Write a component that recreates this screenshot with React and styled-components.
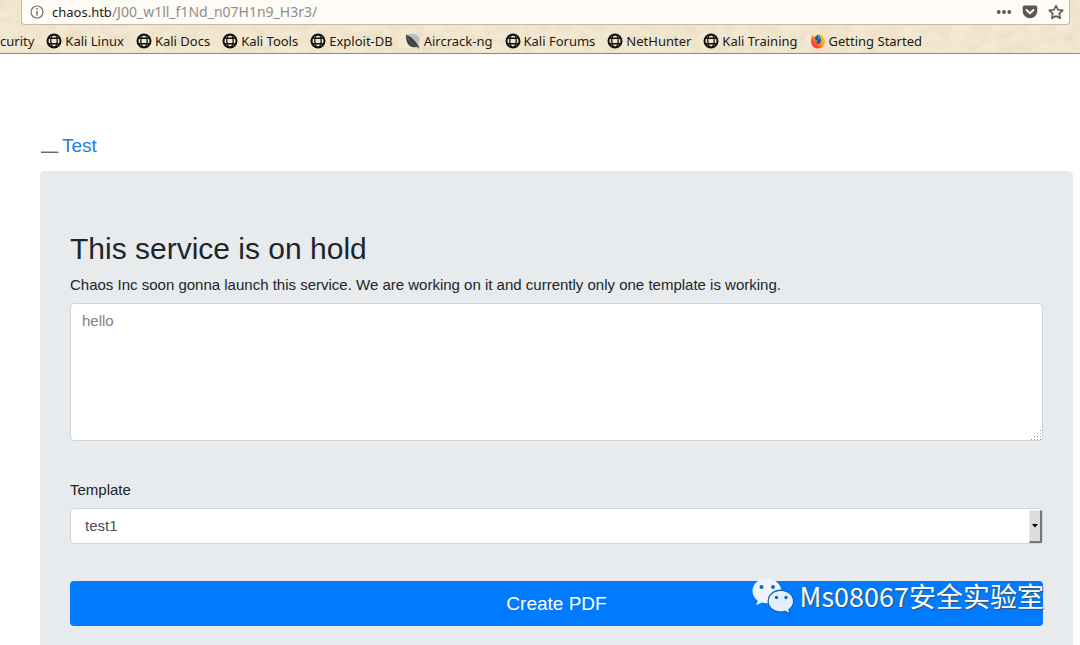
import React from "react";
import styled, { createGlobalStyle } from "styled-components";

const GlobalStyle = createGlobalStyle`
  *, *::before, *::after { box-sizing: border-box; }
  body {
    margin: 0;
    background: #fff;
    color: #212529;
    font-family: "Liberation Sans", Arial, sans-serif;
    font-size: 15px;
    line-height: 24px;
  }
`;

const Page = styled.div`
  display: flex;
  flex-direction: column;
  min-height: 100vh;
`;

const Chrome = styled.header`
  position: relative;
  isolation: isolate;
  flex: none;
  padding: 0 10px 0 0;
  overflow: hidden;
  background: #f3e9d3;
  border-bottom: 1px solid #8f8778;
  font-family: "Noto Sans", "Open Sans", sans-serif;
  color: #1c1a17;
`;

const Paper = styled.svg`
  position: absolute;
  inset: 0;
  z-index: -1;
  width: 100%;
  height: 100%;
`;

const AddressBar = styled.div`
  display: flex;
  align-items: center;
  height: 25px;
  margin-left: 21px;
  padding: 0 5px 0 8px;
  background: rgba(255, 254, 251, 0.88);
  border: 1px solid #c3b9a6;
  border-top: 0;
  border-radius: 0 0 4px 4px;
  font-size: 13px;
  line-height: 24px;
`;

const Host = styled.label`
  margin-left: 8px;
`;

const PathInput = styled.input`
  flex: 1;
  min-width: 0;
  padding: 0;
  border: 0;
  outline: 0;
  background: none;
  color: #8f8d8a;
  font: inherit;
  font-size: 14px;
`;

const IconButton = styled.button`
  display: flex;
  padding: 0;
  border: 0;
  background: none;
  color: #5a5855;
  margin-left: ${(p) => p.$gap || 0}px;
`;

const Bookmarks = styled.nav`
  display: flex;
  align-items: center;
  gap: 12px;
  height: 28px;
  padding-top: 4px;
  white-space: nowrap;
`;

const Bookmark = styled.a`
  display: flex;
  align-items: center;
  gap: 3px;
  color: inherit;
  font-size: 13px;
  line-height: 20px;
  text-decoration: none;
`;

const Main = styled.main`
  display: flex;
  flex-direction: column;
  flex: 1;
  padding: 77px 7px 0 40px;
`;

const Brand = styled.a`
  display: flex;
  align-items: center;
  align-self: flex-start;
  gap: 3px;
  height: 30px;
  color: #1c7fe6;
  font-size: 19px;
  text-decoration: none;
`;

const Panel = styled.section`
  flex: 1;
  margin-top: 10px;
  padding: 60px 30px 20px;
  background: #e7ebee;
  border-radius: 5px 5px 0 0;
`;

const Title = styled.h1`
  margin: 0 0 6px;
  font-size: 30px;
  font-weight: 400;
  line-height: 36px;
`;

const Form = styled.form`
  display: flex;
  flex-direction: column;
`;

const FieldLabel = styled.label`
  display: block;
  margin-bottom: 6px;
`;

const Field = styled.div`
  position: relative;
  display: flex;
  margin-bottom: 37px;
`;

const TextArea = styled.textarea`
  width: 100%;
  height: 138px;
  padding: 5px 11px;
  border: 1px solid #ced4da;
  border-radius: 4px;
  background: #fff;
  color: #495057;
  font: inherit;
  resize: none;
  &::placeholder { color: #7b8288; opacity: 1; }
`;

const Grip = styled.svg`
  position: absolute;
  right: 1px;
  bottom: 1px;
`;

const Select = styled.select`
  appearance: none;
  width: 100%;
  height: 36px;
  padding: 0 14px;
  border: 1px solid #ced4da;
  border-radius: 4px;
  background: #fff;
  color: #495057;
  font: inherit;
`;

const Arrow = styled.span`
  position: absolute;
  top: 2px;
  right: 1px;
  bottom: 1px;
  display: flex;
  align-items: center;
  justify-content: center;
  width: 13px;
  background: #dcdcdc;
  border: solid;
  border-width: 1px 2px 2px 1px;
  border-color: #ececec #777 #777 #ececec;
  pointer-events: none;
`;

const SubmitArea = styled.div`
  position: relative;
  display: flex;
`;

const Submit = styled.button`
  width: 100%;
  height: 45px;
  padding: 0;
  border: 0;
  border-radius: 4px;
  background: #007bff;
  color: #fff;
  font: inherit;
  font-size: 19px;
`;

const Watermark = styled.div`
  position: absolute;
  right: -1px;
  top: -5px;
  display: flex;
  align-items: center;
  gap: 6px;
  color: #fff;
  font-family: "Noto Sans CJK SC", sans-serif;
  font-size: 27px;
  line-height: 40px;
  white-space: nowrap;
  text-shadow: 1px 1px 1px #35506e;
  pointer-events: none;
`;

const Globe = () => (
  <svg width="16" height="16" viewBox="0 0 16 16" fill="none" stroke="#12100d" aria-hidden="true">
    <circle cx="8" cy="8" r="6.5" strokeWidth="2" />
    <ellipse cx="8" cy="8" rx="3.2" ry="6.3" strokeWidth="1.3" />
    <path d="M2.5 5.3h11M2.5 10.7h11" strokeWidth="1.4" />
  </svg>
);

const Aircrack = () => (
  <svg width="16" height="16" viewBox="0 0 16 16" aria-hidden="true">
    <path d="M2 1.500C7 0 13 1 14.500 5.500L13.500 13Z" fill="#b9bec1" />
    <path d="M1 1.500C5 3 10.500 7.500 13.500 13.500C9.500 15.300 4 13.800 2.300 10C1.200 7 .8 4 1 1.500Z" fill="#3d4040" />
    <path d="M2 3c1 4 4.500 8.500 10 10.500" stroke="#777" strokeWidth=".7" fill="none" />
    <path d="M11 13l2.500-.8L14 16Z" fill="#56514a" />
  </svg>
);

const Firefox = () => (
  <svg width="16" height="16" viewBox="0 0 16 16" aria-hidden="true">
    <defs>
      <linearGradient id="flame" x1="1" y1="0" x2="0" y2="1">
        <stop offset="0" stopColor="#ffe53b" />
        <stop offset=".45" stopColor="#ff9a1f" />
        <stop offset=".75" stopColor="#ff4037" />
        <stop offset="1" stopColor="#ed1c78" />
      </linearGradient>
    </defs>
    <path d="M2.300 2l1.500 2C6 2 8 1.200 10 1.200c3 1 5 4 5 7.300a7 7 0 0 1-14 0C1 6 1.600 3.500 2.300 2Z" fill="url(#flame)" />
    <path d="M7.500 1.500C9.500 2 11 4.500 11 7.400c0 2.400-1.500 3.400-3.400 3.400-1.900 0-3.400-1.300-3.400-2.600 1 .6 2.400.5 3-.5L5.500 6.500 4.800 4.400C6 4 7 3 7.500 1.500Z" fill="#1557b5" />
    <path d="M7.600 2C9.500 3 10.200 5 10 7L8 5.300Z" fill="#28a5e8" />
    <path d="M4 8.300c1.500.8 3 .1 4 .3-.8 1.200-2.300 1.500-3.400 1.200Z" fill="#ff8b24" />
  </svg>
);

const Info = () => (
  <svg width="14" height="14" viewBox="0 0 14 14" fill="none" stroke="#73716e" aria-hidden="true">
    <circle cx="7" cy="7" r="6" strokeWidth="1.200" />
    <path d="M7 6v4.500" strokeWidth="1.500" />
    <circle cx="7" cy="3.900" r=".9" fill="#73716e" stroke="none" />
  </svg>
);

const Dots = () => (
  <svg width="16" height="16" viewBox="0 0 16 16" fill="currentColor">
    <circle cx="2.700" cy="8" r="1.900" />
    <circle cx="8" cy="8" r="1.900" />
    <circle cx="13.300" cy="8" r="1.900" />
  </svg>
);

const Pocket = () => (
  <svg width="16" height="16" viewBox="0 0 16 16">
    <path d="M2.500 1.500h11A1.800 1.800 0 0 1 15.300 3.300V7a7.300 7.300 0 0 1-14.600 0V3.300A1.800 1.800 0 0 1 2.500 1.500Z" fill="currentColor" />
    <path d="M4.600 6L8 9.200 11.400 6" fill="none" stroke="#fff" strokeWidth="1.900" strokeLinecap="round" strokeLinejoin="round" />
  </svg>
);

const Star = () => (
  <svg width="16" height="16" viewBox="0 0 16 16" fill="none" stroke="currentColor">
    <path d="M8 1.500l2 4.300 4.700.6-3.500 3.200.9 4.700L8 12l-4.100 2.300.9-4.700L1.300 6.400 6 5.800Z" strokeWidth="1.600" strokeLinejoin="round" />
  </svg>
);

const WeChat = () => (
  <svg width="42" height="36" viewBox="0 0 42 36" aria-hidden="true">
    <path d="M15 .5C6.800.5.500 6 .500 13c0 4 2 7.300 5.200 9.500L4.200 27.200l5.600-2.800c1.700.5 3.400.8 5.200.8h1C14.500 17 21 11.300 29.300 11.500 28 5 22 .5 15 .5Z" fill="#eef4fc" />
    <path d="M28.800 12.500c-7.100 0-12.600 4.800-12.600 10.700s5.500 10.700 12.600 10.700c1.500 0 3-.2 4.300-.7l5 2.500-1.400-4.200c3-2 4.800-4.900 4.800-8.300 0-5.900-5.600-10.700-12.700-10.700Z" fill="#e2eefc" stroke="#1c4f8c" strokeWidth="1" />
    <g fill="#1767b8">
      <circle cx="9.500" cy="9" r="2" />
      <circle cx="21" cy="9" r="2" />
      <circle cx="24.500" cy="19.500" r="1.700" />
      <circle cx="34" cy="19.500" r="1.700" />
    </g>
  </svg>
);

const bookmarks = [
  { label: "curity" },
  { label: "Kali Linux", Icon: Globe },
  { label: "Kali Docs", Icon: Globe },
  { label: "Kali Tools", Icon: Globe },
  { label: "Exploit-DB", Icon: Globe },
  { label: "Aircrack-ng", Icon: Aircrack },
  { label: "Kali Forums", Icon: Globe },
  { label: "NetHunter", Icon: Globe },
  { label: "Kali Training", Icon: Globe },
  { label: "Getting Started", Icon: Firefox },
];

export default function App() {
  return (
    <Page>
      <GlobalStyle />
      <Chrome>
        <Paper aria-hidden="true">
          <filter id="grain" x="0" y="0" width="100%" height="100%">
            <feTurbulence type="fractalNoise" baseFrequency="0.06 0.09" numOctaves="4" seed="4" />
            <feColorMatrix values="0 0 0 0 0.72  0 0 0 0 0.56  0 0 0 0 0.34  0.6 0 0 0 -0.2" />
          </filter>
          <rect width="100%" height="100%" filter="url(#grain)" />
        </Paper>
        <AddressBar>
          <Info />
          <Host htmlFor="address">chaos.htb</Host>
          <PathInput id="address" defaultValue="/J00_w1ll_f1Nd_n07H1n9_H3r3/" />
          <IconButton type="button" aria-label="Page actions"><Dots /></IconButton>
          <IconButton type="button" aria-label="Save to Pocket" $gap={10}><Pocket /></IconButton>
          <IconButton type="button" aria-label="Bookmark this page" $gap={10}><Star /></IconButton>
        </AddressBar>
        <Bookmarks>
          {bookmarks.map(({ label, Icon }) => (
            <Bookmark key={label} href="#">
              {Icon && <Icon />}
              {label}
            </Bookmark>
          ))}
        </Bookmarks>
      </Chrome>
      <Main>
        <Brand href="#">
          <svg width="19" height="30" viewBox="0 0 19 30" aria-hidden="true">
            <path d="M1 20.500h17" stroke="#bbb" strokeWidth="1" />
            <path d="M1 21.500h17.500" stroke="#666" strokeWidth="1" />
          </svg>
          Test
        </Brand>
        <Panel>
          <Title>This service is on hold</Title>
          <Form>
            <FieldLabel htmlFor="content">
              Chaos Inc soon gonna launch this service. We are working on it and currently only one template is working.
            </FieldLabel>
            <Field>
              <TextArea id="content" placeholder="hello" />
              <Grip width="11" height="11" viewBox="0 0 11 11" fill="#999" aria-hidden="true">
                <path d="M9 1h1v1h-1zM9 4h1v1h-1zM6 4h1v1h-1zM9 7h1v1h-1zM6 7h1v1h-1zM3 7h1v1h-1zM9 10h1v1h-1zM6 10h1v1h-1zM3 10h1v1h-1zM0 10h1v1h-1z" />
              </Grip>
            </Field>
            <FieldLabel htmlFor="template">Template</FieldLabel>
            <Field>
              <Select id="template">
                <option>test1</option>
              </Select>
              <Arrow>
                <svg width="6" height="4" viewBox="0 0 6 4" aria-hidden="true">
                  <path d="M0 0h6L3 3.500Z" />
                </svg>
              </Arrow>
            </Field>
            <SubmitArea>
              <Submit type="button">Create PDF</Submit>
              <Watermark>
                <WeChat />
                <span>Ms08067安全实验室</span>
              </Watermark>
            </SubmitArea>
          </Form>
        </Panel>
      </Main>
    </Page>
  );
}
